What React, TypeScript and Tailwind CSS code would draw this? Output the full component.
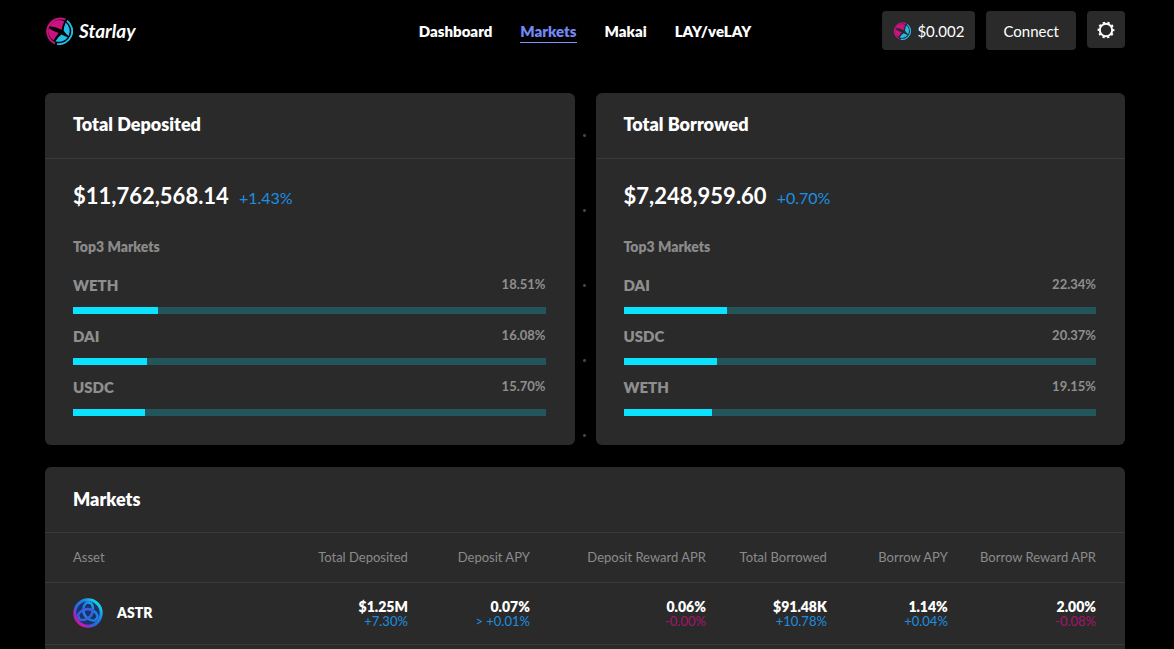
import React from "react";

type Share = { symbol: string; share: number };
type Summary = { title: string; total: string; change: string; top: Share[] };

const summaries: Summary[] = [
  {
    title: "Total Deposited",
    total: "$11,762,568.14",
    change: "+1.43%",
    top: [
      { symbol: "WETH", share: 18.51 },
      { symbol: "DAI", share: 16.08 },
      { symbol: "USDC", share: 15.7 },
    ],
  },
  {
    title: "Total Borrowed",
    total: "$7,248,959.60",
    change: "+0.70%",
    top: [
      { symbol: "DAI", share: 22.34 },
      { symbol: "USDC", share: 20.37 },
      { symbol: "WETH", share: 19.15 },
    ],
  },
];

const columns = [
  { label: "Total Deposited", value: "$1.25M", change: "+7.30%", up: true },
  { label: "Deposit APY", value: "0.07%", change: "> +0.01%", up: true },
  { label: "Deposit Reward APR", value: "0.06%", change: "-0.00%", up: false },
  { label: "Total Borrowed", value: "$91.48K", change: "+10.78%", up: true },
  { label: "Borrow APY", value: "1.14%", change: "+0.04%", up: true },
  { label: "Borrow Reward APR", value: "2.00%", change: "-0.08%", up: false },
];

const links = ["Dashboard", "Markets", "Makai", "LAY/veLAY"];

function StarlayMark({ className }: { className: string }) {
  return (
    <svg viewBox="0 0 28 28" className={className} aria-hidden="true" fill="none">
      <path d="M20.5 2.6A13 13 0 1 0 10 26.400" stroke="#c9137f" strokeWidth="1.900" />
      <path d="M22 3.700A13 13 0 0 1 12 26.900" stroke="#21bdea" strokeWidth="1.900" />
      <path d="M4.200 9.200A10.800 10.800 0 0 1 19.300 4.600Q17.200 8.500 16.600 12.800Q10.500 9.300 4.200 9.200Z" fill="#c9137f" />
      <path d="M3.500 11Q8.500 14.500 13.700 16Q10.500 19.500 8.700 23.400A10.800 10.800 0 0 1 3.500 11Z" fill="#c9137f" />
      <path d="M20.700 5.600A10.800 10.800 0 0 1 23.600 18.900Q20.600 16.800 18.600 13.800Q19 9.500 20.700 5.600Z" fill="#21bdea" />
      <path d="M10.400 24.200Q13 20 16.600 17.600Q19.500 19.200 22.800 20.200A10.800 10.800 0 0 1 10.400 24.200Z" fill="#21bdea" />
    </svg>
  );
}

function GearIcon() {
  return (
    <svg viewBox="0 0 18 18" className="size-[18px]" aria-hidden="true" fill="none" stroke="#fff">
      <circle cx="9" cy="9" r="6.200" strokeWidth="2" />
      <circle cx="9" cy="9" r="7.500" strokeWidth="1.800" strokeDasharray="2.356 2.356" strokeDashoffset="1.178" />
    </svg>
  );
}

function AstrIcon() {
  return (
    <svg viewBox="0 0 30 30" className="size-[30px]" aria-hidden="true" fill="none">
      <defs>
        <linearGradient id="astr" x1="3" y1="27" x2="26" y2="4" gradientUnits="userSpaceOnUse">
          <stop offset="0" stopColor="#f0069b" />
          <stop offset="0.180" stopColor="#b220bd" />
          <stop offset="0.380" stopColor="#2a63e0" />
          <stop offset="0.700" stopColor="#1a87e6" />
          <stop offset="1" stopColor="#16e3ea" />
        </linearGradient>
      </defs>
      <circle cx="15" cy="15" r="13" fill="#17346b" />
      <g stroke="url(#astr)">
        <circle cx="15" cy="15" r="13.200" strokeWidth="3" />
        <path
          d="M17.500 4.500C21.500 9 20.800 16.500 15 20.500C9.200 16.500 9.500 9 12.500 5.500Q15 3.500 17.500 5.500"
          strokeWidth="2.400"
        />
        <path
          d="M17.500 4.500C21.500 9 20.800 16.500 15 20.500C9.200 16.500 9.500 9 12.500 5.500Q15 3.500 17.500 5.500"
          strokeWidth="2.400"
          stroke="#2080e2"
          transform="rotate(120 15 15)"
        />
        <path
          d="M17.500 4.500C21.500 9 20.800 16.500 15 20.500C9.200 16.500 9.500 9 12.500 5.500Q15 3.500 17.500 5.500"
          strokeWidth="2.400"
          stroke="#3a5fd8"
          transform="rotate(240 15 15)"
        />
      </g>
    </svg>
  );
}

function Header() {
  return (
    <header className="bg-black pr-1">
      <div className="mx-auto grid max-w-[1080px] grid-cols-[1fr_auto_1fr] items-start pt-[11px] pb-[43px]">
        <a href="#home" className="flex h-[39px] items-center gap-1.5">
          <StarlayMark className="size-7" />
          <span className="text-[19px] leading-6 font-bold italic">Starlay</span>
        </a>
        <nav className="flex h-[39px] items-center gap-7 text-[15px] leading-5 font-extrabold">
          {links.map((link) => (
            <a
              key={link}
              href={`#${link}`}
              className={
                link === "Markets"
                  ? "border-y border-t-transparent border-b-[#7c8ffb] py-px text-[#7488f5]"
                  : "border-y border-transparent py-px"
              }
            >
              {link}
            </a>
          ))}
        </nav>
        <div className="flex items-start justify-end gap-[11px] text-[15px] leading-5">
          <button className="flex h-[39px] items-center gap-1.5 rounded bg-[#2a2a2a] px-[11px]">
            <StarlayMark className="size-[18px]" />
            $0.002
          </button>
          <button className="h-[39px] rounded bg-[#2a2a2a] px-[17px]">Connect</button>
          <button aria-label="Settings" className="flex h-[37px] w-[38px] items-center justify-center rounded bg-[#2a2a2a]">
            <GearIcon />
          </button>
        </div>
      </div>
    </header>
  );
}

function SummaryCard({ title, total, change, top }: Summary) {
  return (
    <section className="rounded-md bg-[#2a2a2a]">
      <h2 className="border-b border-[#3a3a3a] px-7 pt-[19px] pb-[22px] text-lg leading-6 font-extrabold">{title}</h2>
      <div className="pt-[23px] pr-[29px] pb-[29px] pl-7">
        <p className="flex items-baseline gap-2.5">
          <span className="text-[22px] leading-7 font-bold">{total}</span>
          <span className="text-base leading-5 text-[#1e8fe0]">{change}</span>
        </p>
        <h3 className="mt-[27px] text-sm leading-5 font-extrabold text-[#8b8b8b]">Top3 Markets</h3>
        <ul className="mt-[18px] flex flex-col gap-3 font-bold text-[#8f8f8f]">
          {top.map(({ symbol, share }) => (
            <li key={symbol} className="flex flex-col gap-3">
              <div className="flex justify-between">
                <span className="text-[15px] leading-5 font-extrabold">{symbol}</span>
                <span className="text-[13px] leading-[18px]">{share.toFixed(2)}%</span>
              </div>
              <div className="h-[7px] bg-[#22565b]">
                <div className="h-full bg-[#0be2ff]" style={{ width: `${share - 0.5}%` }} />
              </div>
            </li>
          ))}
        </ul>
      </div>
    </section>
  );
}

function MarketsTable() {
  return (
    <section className="mt-[22px] grow rounded-t-md bg-[#2a2a2a]">
      <h2 className="border-b border-[#3a3a3a] px-7 pt-5 pb-[21px] text-lg leading-6 font-extrabold">Markets</h2>
      <table className="w-full table-fixed text-right">
        <colgroup>
          <col className="w-[22.4%]" />
          <col className="w-[11.2%]" />
          <col className="w-[11.3%]" />
          <col className="w-[16.3%]" />
          <col className="w-[11.2%]" />
          <col className="w-[11.2%]" />
          <col className="w-[16.4%]" />
        </colgroup>
        <thead>
          <tr className="h-[49px] border-b border-[#3a3a3a] text-[13px] leading-5 whitespace-nowrap text-[#8b8b8b]">
            <th className="pl-7 text-left font-normal">Asset</th>
            {columns.map(({ label }) => (
              <th key={label} className="font-normal last:pr-[29px]">{label}</th>
            ))}
          </tr>
        </thead>
        <tbody>
          <tr className="h-[62px] border-b border-[#3a3a3a] text-sm">
            <th className="pl-7 text-left font-extrabold">
              <span className="flex items-center gap-3.5">
                <AstrIcon />
                ASTR
              </span>
            </th>
            {columns.map(({ label, value, change, up }) => (
              <td key={label} className="pt-0.5 leading-[15px] last:pr-[29px]">
                <span className="block font-extrabold">{value}</span>
                <span className={up ? "block text-[13px] text-[#1e8fe0]" : "block text-[13px] text-[#a8146c]"}>{change}</span>
              </td>
            ))}
          </tr>
        </tbody>
      </table>
    </section>
  );
}

export default function App() {
  return (
    <div className="flex min-h-screen flex-col bg-black font-['Lato',sans-serif] text-white">
      <Header />
      <main className="flex grow flex-col bg-[radial-gradient(circle,#444_1px,transparent_2px)] bg-[size:75px_75px] bg-[position:547px_5px] pr-1">
        <div className="mx-auto flex w-full max-w-[1080px] grow flex-col">
          <div className="grid grid-cols-2 gap-[21px]">
            {summaries.map((summary) => (
              <SummaryCard key={summary.title} {...summary} />
            ))}
          </div>
          <MarketsTable />
        </div>
      </main>
    </div>
  );
}
